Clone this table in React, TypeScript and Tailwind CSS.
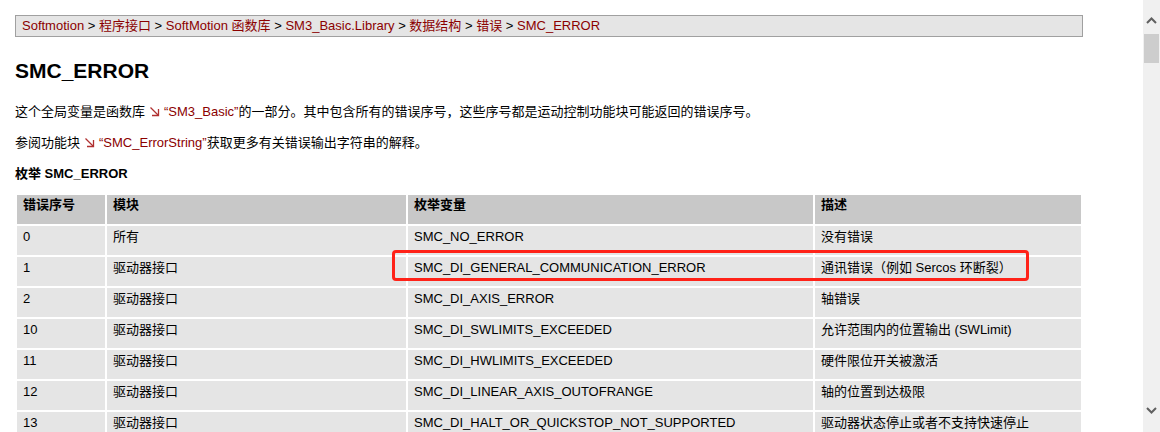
import React from "react";

const rows = [
  { no: "0", mod: "所有", name: "SMC_NO_ERROR", desc: "没有错误" },
  { no: "1", mod: "驱动器接口", name: "SMC_DI_GENERAL_COMMUNICATION_ERROR", desc: "通讯错误（例如 Sercos 环断裂）" },
  { no: "2", mod: "驱动器接口", name: "SMC_DI_AXIS_ERROR", desc: "轴错误" },
  { no: "10", mod: "驱动器接口", name: "SMC_DI_SWLIMITS_EXCEEDED", desc: "允许范围内的位置输出 (SWLimit)" },
  { no: "11", mod: "驱动器接口", name: "SMC_DI_HWLIMITS_EXCEEDED", desc: "硬件限位开关被激活" },
  { no: "12", mod: "驱动器接口", name: "SMC_DI_LINEAR_AXIS_OUTOFRANGE", desc: "轴的位置到达极限" },
  { no: "13", mod: "驱动器接口", name: "SMC_DI_HALT_OR_QUICKSTOP_NOT_SUPPORTED", desc: "驱动器状态停止或者不支持快速停止" },
];

const crumbs = ["Softmotion", "程序接口", "SoftMotion 函数库", "SM3_Basic.Library", "数据结构", "错误", "SMC_ERROR"];

function LinkArrow() {
  return (
    <svg width="11" height="11" viewBox="0 0 11 11" className="mx-[4px] inline-block align-[-1px]">
      <path d="M1.5 1.5 L9 9" stroke="#b03030" strokeWidth="1.3" fill="none" />
      <path d="M3 9.5 H9.5 V3" stroke="#b03030" strokeWidth="1.3" fill="none" />
    </svg>
  );
}

function Scrollbar() {
  return (
    <div className="flex h-[432px] w-[17px] shrink-0 flex-col items-center bg-[#f0f0f0]">
      <svg width="11" height="7" viewBox="0 0 11 7" className="mt-[17px]">
        <path d="M1 6 L5.5 1.5 L10 6" stroke="#606060" strokeWidth="2" fill="none" />
      </svg>
      <div className="mt-[10px] h-[29px] w-[15px] bg-[#cdcdcd]" />
      <div className="flex-1" />
      <svg width="11" height="7" viewBox="0 0 11 7" className="mb-[18px]">
        <path d="M1 1 L5.5 5.5 L10 1" stroke="#606060" strokeWidth="2" fill="none" />
      </svg>
    </div>
  );
}

export default function App() {
  return (
    <div className="flex h-[432px] w-[1160px] overflow-hidden bg-white font-['Liberation_Sans','Noto_Sans_CJK_SC',sans-serif] text-[13px] text-black">
      <div className="flex-1 pl-[15px] pt-[15px]">
        {/* Breadcrumb */}
        <div className="h-[22px] w-[1068px] whitespace-pre border border-[#a0a0a0] bg-[#e5e5e5] pl-[6px] leading-[20px]">
          {crumbs.map((c, i) => (
            <React.Fragment key={c}>
              {i > 0 && <span className="text-black">{" > "}</span>}
              <span className="text-[#8b0000]">{c}</span>
            </React.Fragment>
          ))}
        </div>

        <h1 className="mt-[22px] text-[21px] font-bold leading-[24px]">SMC_ERROR</h1>

        <p className="mt-[20px] leading-[18px]">
          这个全局变量是函数库
          <LinkArrow />
          <span className="text-[#8b0000]">“SM3_Basic”</span>
          的一部分。其中包含所有的错误序号，这些序号都是运动控制功能块可能返回的错误序号。
        </p>
        <p className="mt-[13px] leading-[18px]">
          参阅功能块
          <LinkArrow />
          <span className="text-[#8b0000]">“SMC_ErrorString”</span>
          获取更多有关错误输出字符串的解释。
        </p>
        <h3 className="mt-[13px] font-bold leading-[18px]">枚举 SMC_ERROR</h3>

        {/* Table */}
        <div className="relative ml-[2px] mt-[12px]">
          <div className="grid grid-cols-[88px_299px_405px_266px] gap-[2px]">
            {["错误序号", "模块", "枚举变量", "描述"].map((h) => (
              <div key={h} className="h-[29px] bg-[#c8c8c8] pl-[6px] pt-[2px] font-bold leading-[16px]">
                {h}
              </div>
            ))}
            {rows.map((r) => (
              <React.Fragment key={r.no}>
                <div className="h-[29px] bg-[#e5e5e5] pl-[6px] pt-[3px] leading-[16px]">{r.no}</div>
                <div className="h-[29px] bg-[#e5e5e5] pl-[6px] pt-[3px] leading-[16px]">{r.mod}</div>
                <div className="h-[29px] bg-[#e5e5e5] pl-[6px] pt-[3px] leading-[16px]">{r.name}</div>
                <div className="h-[29px] bg-[#e5e5e5] pl-[6px] pt-[3px] leading-[16px]">{r.desc}</div>
              </React.Fragment>
            ))}
          </div>
          {/* highlight */}
          <div className="absolute left-[375px] top-[55px] h-[31px] w-[637px] rounded-[4px] border-[3px] border-[#ff2218]" />
        </div>
      </div>
      <Scrollbar />
    </div>
  );
}
